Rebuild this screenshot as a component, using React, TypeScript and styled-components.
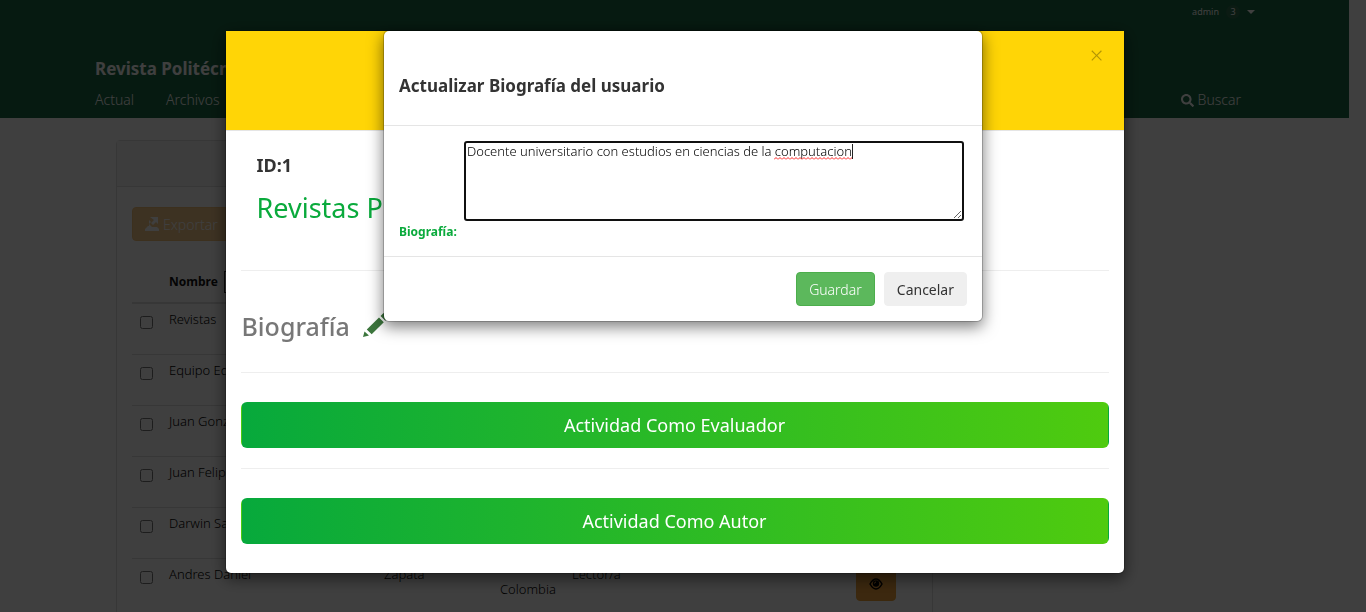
import React, { useState } from "react";
import styled, { createGlobalStyle, css } from "styled-components";
import { FaSearch } from "react-icons/fa";

const Global = createGlobalStyle`
  *, *::before, *::after { box-sizing: border-box; }
  html, body { height: 100%; }
  body {
    margin: 0;
    overflow: hidden;
    background: #fff;
    color: #333;
    font-family: "Noto Sans", "Open Sans", sans-serif;
    font-size: 13px;
    font-weight: 300;
    line-height: 20px;
  }
  button, input, select, textarea { font-family: inherit; }
`;

const Page = styled.div`
  padding-right: 17px;
`;

const SiteHeader = styled.header`
  display: flex;
  flex-direction: column;
  height: 118px;
  padding: 0 94px 0 95px;
  background: #1a6844;
  color: #fff;
`;

const UserNav = styled.nav`
  display: flex;
  justify-content: flex-end;
  align-items: center;
  gap: 7px;
  height: 24px;
  font-size: 9px;
  font-weight: 400;
`;

const UserLink = styled.a`
  color: inherit;
  text-decoration: none;
`;

const Badge = styled.span`
  width: 14px;
  height: 14px;
  border-radius: 7px;
  background: #2c6c4e;
  line-height: 14px;
  text-align: center;
`;

const Caret = styled.span`
  border: 4px solid transparent;
  border-top-color: #fff;
  border-bottom: 0;
`;

const SiteName = styled.a`
  margin-top: 33px;
  color: #fff;
  font-size: 17px;
  font-weight: 700;
  line-height: 24px;
  text-decoration: none;
`;

const MainNav = styled.nav`
  display: flex;
  gap: 32px;
  margin-top: 9px;
  padding-right: 14px;
`;

const NavLink = styled.a<{ $end?: boolean }>`
  display: flex;
  align-items: center;
  gap: 4px;
  color: #fff;
  font-size: 14px;
  text-decoration: none;
  ${(p) => p.$end && css`margin-left: auto;`}
`;

const Panel = styled.section`
  width: 817px;
  margin: 22px 0 0 116px;
  border: 1px solid #ddd;
  border-radius: 4px;
`;

const PanelHeading = styled.div`
  height: 46px;
  border-bottom: 1px solid #ddd;
  background: #f5f5f5;
`;

const PanelBody = styled.div`
  padding: 20px 15px;
`;

const ExportButton = styled.button`
  display: flex;
  align-items: center;
  gap: 4px;
  height: 34px;
  padding: 0 12px;
  border: 1px solid #eea236;
  border-radius: 4px;
  background: #f0ad4e;
  color: #fff;
  font-size: 14px;
  font-weight: 300;
  opacity: 0.65;
`;

const Users = styled.table`
  width: 100%;
  margin-top: 20px;
  border-collapse: collapse;
  table-layout: fixed;

  th {
    height: 42px;
    padding: 8px;
    border-bottom: 2px solid #ddd;
    color: #111;
    text-align: left;
    font-size: 12px;
    font-weight: 700;
  }
  td {
    height: 51px;
    padding: 8px;
    border-top: 1px solid #ddd;
    color: #000;
    line-height: 15px;
    vertical-align: top;
  }
`;

const HeadCell = styled.div`
  display: flex;
  align-items: center;
  gap: 6px;
`;

const Filter = styled.input`
  width: 90px;
  height: 22px;
  border: 1px solid #333;
`;

const Tick = styled.input`
  display: block;
  width: 13px;
  height: 13px;
  margin: 4px 0 0;
`;

const ViewButton = styled.button`
  display: flex;
  align-items: center;
  justify-content: center;
  width: 40px;
  height: 34px;
  border: 1px solid #eea236;
  border-radius: 4px;
  background: #f0a23c;
  color: #000;
`;

const Backdrop = styled.div`
  position: fixed;
  inset: 0;
  background: rgba(0, 0, 0, 0.5);
`;

const DialogLayer = styled.div<{ $gutter?: boolean }>`
  position: fixed;
  inset: 0;
  display: flex;
  justify-content: center;
  align-items: flex-start;
  padding: 30px ${(p) => (p.$gutter ? 17 : 0)}px 0 0;
`;

const Dialog = styled.div<{ $wide?: boolean }>`
  width: ${(p) => (p.$wide ? 900 : 600)}px;
  max-width: 100%;
  border: 1px solid rgba(0, 0, 0, 0.2);
  border-radius: 6px;
  background: #fff;
  background-clip: padding-box;
  box-shadow: 0 5px 15px rgba(0, 0, 0, 0.5);
`;

const ProfileHeader = styled.header`
  display: flex;
  justify-content: flex-end;
  align-items: flex-start;
  height: 100px;
  padding: 14px 20px;
  border-bottom: 1px solid #e5e5e5;
  background: #ffd506;
`;

const CloseButton = styled.button`
  padding: 0;
  border: 0;
  background: none;
  color: #000;
  font-size: 24px;
  font-weight: 300;
  line-height: 20px;
  opacity: 0.3;
`;

const ProfileBody = styled.div`
  padding: 15px 15px 29px;
`;

const Identity = styled.div`
  display: flex;
  flex-direction: column;
  gap: 13px;
  padding: 7px 16px 44px;
`;

const UserId = styled.h4`
  margin: 0;
  font-size: 18px;
  font-weight: 700;
  line-height: 24px;
`;

const UserName = styled.h2`
  margin: 0;
  color: #0aaa3c;
  font-size: 27px;
  font-weight: 400;
  line-height: 36px;
`;

const Rule = styled.hr`
  margin: 0;
  border: 0;
  border-top: 1px solid #eee;
`;

const BioRow = styled.div`
  display: flex;
  align-items: center;
  gap: 13px;
  height: 101px;
  padding: 9px 1px 0;
`;

const BioTitle = styled.h2`
  margin: 0;
  color: #777;
  font-size: 25px;
  font-weight: 500;
  line-height: 36px;
`;

const EditButton = styled.button`
  display: flex;
  padding: 0 0 4px;
  border: 0;
  background: none;
  color: #3c763d;
`;

const ActivityButton = styled.button<{ $gap?: boolean }>`
  display: block;
  width: 100%;
  height: 46px;
  margin: 29px 0 ${(p) => (p.$gap ? 20 : 0)}px;
  border: 1px solid transparent;
  border-radius: 6px;
  background: linear-gradient(to right, #07a93c, #4fcb0f);
  color: #fff;
  font-size: 18px;
  font-weight: 400;
`;

const EditHeader = styled.header`
  padding: 43px 15px 27px;
  border-bottom: 1px solid #e5e5e5;
`;

const EditTitle = styled.h4`
  margin: 0;
  font-size: 17px;
  font-weight: 700;
  line-height: 24px;
`;

const EditBody = styled.div`
  display: flex;
  align-items: flex-end;
  gap: 3px;
  padding: 15px 18px 15px 15px;
`;

const BioLabel = styled.label`
  min-width: 62px;
  color: #0aaa3c;
  font-size: 12px;
  font-weight: 700;
  line-height: 18px;
`;

const FieldWrap = styled.div`
  position: relative;
  display: flex;
  flex: 1;
  min-width: 0;
  margin-bottom: 20px;
`;

const BioField = styled.textarea`
  width: 100%;
  height: 80px;
  padding: 0 1px;
  border: 2px solid #101010;
  border-radius: 3px;
  outline: 0;
  background: #fff;
  color: #000;
  font-size: 13px;
  font-weight: 300;
  line-height: 17px;
`;

const SpellingMark = styled.svg`
  position: absolute;
  top: 3px;
  left: 310px;
  pointer-events: none;
`;

const EditFooter = styled.footer`
  display: flex;
  justify-content: flex-end;
  gap: 9px;
  padding: 15px;
  border-top: 1px solid #e5e5e5;
`;

const ActionButton = styled.button<{ $primary?: boolean }>`
  height: 34px;
  padding: 0 12px;
  border: 1px solid ${(p) => (p.$primary ? "#4cae4c" : "#efefef")};
  border-radius: 4px;
  background: ${(p) => (p.$primary ? "#5cb85c" : "#efefef")};
  color: ${(p) => (p.$primary ? "#fff" : "#333")};
  font-size: 14px;
  font-weight: ${(p) => (p.$primary ? 300 : 400)};
`;

const ExportIcon = () => (
  <svg width="14" height="14" viewBox="0 0 14 14" fill="currentColor" aria-hidden="true">
    <path d="M5 0h8v7l-2-2-3 3-2-2 3-3zM4 3l2 2-2 2 3 3h5l2 2v2H0v-2l3-3h1z" />
  </svg>
);

const EyeIcon = () => (
  <svg width="14" height="12" viewBox="0 0 14 12" aria-hidden="true">
    <path d="M1 6C3 2.500 5 1 7 1s4 1.500 6 5c-2 3.500-4 5-6 5S3 9.500 1 6z" fill="none" stroke="currentColor" strokeWidth="1.500" />
    <circle cx="7" cy="5.500" r="3.200" fill="currentColor" />
    <path d="M5.500 5.500A1.500 1.500 0 0 1 7 4" fill="none" stroke="#f0a23c" strokeWidth="1" />
  </svg>
);

const PencilIcon = () => (
  <svg width="25" height="25" viewBox="0 0 25 25" fill="currentColor" aria-hidden="true">
    <path d="M0 25l1.500-5.500 4.500 4zM3.800 17.500L16 5.500l4.800 4.800L8.700 22.300zM17.500 4l2.500-2.500q1-1 2 0l2.300 2.300q1 1 0 2L22.300 8.800z" />
  </svg>
);

const users = [
  { name: "Revistas" },
  { name: "Equipo Editorial" },
  { name: "Juan Gonzalez" },
  { name: "Juan Felipe" },
  { name: "Darwin Sanchez" },
  { name: "Andres Daniel", surname: "Zapata", country: "Colombia", role: "Lector/a" },
];

export default function App() {
  const [bio, setBio] = useState("Docente universitario con estudios en ciencias de la computacion");
  return (
    <>
      <Global />
      <Page>
        <SiteHeader>
          <UserNav>
            <UserLink href="#user">admin</UserLink>
            <Badge>3</Badge>
            <Caret />
          </UserNav>
          <SiteName href="#home">Revista Politécnica</SiteName>
          <MainNav>
            <NavLink href="#actual">Actual</NavLink>
            <NavLink href="#archivos">Archivos</NavLink>
            <NavLink href="#buscar" $end>
              <FaSearch size={13} /> Buscar
            </NavLink>
          </MainNav>
        </SiteHeader>
        <Panel>
          <PanelHeading />
          <PanelBody>
            <ExportButton disabled>
              <ExportIcon /> Exportar
            </ExportButton>
            <Users>
              <colgroup>
                <col width="29" />
                <col width="215" />
                <col width="116" />
                <col width="72" />
                <col />
                <col width="69" />
              </colgroup>
              <thead>
                <tr>
                  <th />
                  <th>
                    <HeadCell>
                      <label htmlFor="filter">Nombre</label>
                      <Filter id="filter" />
                    </HeadCell>
                  </th>
                  <th />
                  <th />
                  <th />
                  <th />
                </tr>
              </thead>
              <tbody>
                {users.map((u) => (
                  <tr key={u.name}>
                    <td><Tick type="checkbox" aria-label={u.name} /></td>
                    <td>{u.name}</td>
                    <td>{u.surname}</td>
                    <td><br />{u.country}</td>
                    <td>{u.role}</td>
                    <td><ViewButton aria-label="Ver"><EyeIcon /></ViewButton></td>
                  </tr>
                ))}
              </tbody>
            </Users>
          </PanelBody>
        </Panel>
      </Page>
      <Backdrop />
      <Backdrop />
      <DialogLayer $gutter>
        <Dialog $wide role="dialog" aria-label="Usuario">
          <ProfileHeader>
            <CloseButton aria-label="Cerrar">×</CloseButton>
          </ProfileHeader>
          <ProfileBody>
            <Identity>
              <UserId>ID:1</UserId>
              <UserName>Revistas P</UserName>
            </Identity>
            <Rule />
            <BioRow>
              <BioTitle>Biografía</BioTitle>
              <EditButton aria-label="Editar"><PencilIcon /></EditButton>
            </BioRow>
            <Rule />
            <ActivityButton $gap>Actividad Como Evaluador</ActivityButton>
            <Rule />
            <ActivityButton>Actividad Como Autor</ActivityButton>
          </ProfileBody>
        </Dialog>
      </DialogLayer>
      <DialogLayer>
        <Dialog role="dialog" aria-labelledby="edit-title">
          <EditHeader>
            <EditTitle id="edit-title">Actualizar Biografía del usuario</EditTitle>
          </EditHeader>
          <EditBody>
            <BioLabel htmlFor="bio">Biografía:</BioLabel>
            <FieldWrap>
              <BioField
                id="bio"
                autoFocus
                value={bio}
                onChange={(e) => setBio(e.target.value)}
                onFocus={(e) => e.target.setSelectionRange(bio.length, bio.length)}
              />
              <SpellingMark width="80" height="16" viewBox="0 0 80 16" aria-hidden="true">
                <defs>
                  <pattern id="wave" y="13" width="4" height="3" patternUnits="userSpaceOnUse">
                    <path d="M0 2.500L2 .500L4 2.500" fill="none" stroke="#f22" />
                  </pattern>
                </defs>
                <rect y="13" width="78" height="3" fill="url(#wave)" />
                <path d="M78.500 0v15" stroke="#222" />
              </SpellingMark>
            </FieldWrap>
          </EditBody>
          <EditFooter>
            <ActionButton $primary>Guardar</ActionButton>
            <ActionButton>Cancelar</ActionButton>
          </EditFooter>
        </Dialog>
      </DialogLayer>
    </>
  );
}
